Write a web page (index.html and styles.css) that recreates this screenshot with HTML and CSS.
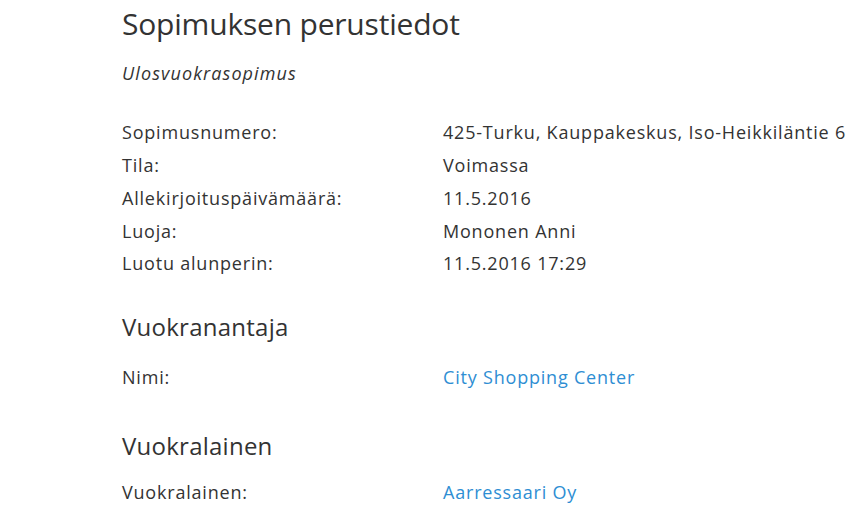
FILE: index.html
```html
<!DOCTYPE html>
<html lang="fi">
<head>
<meta charset="utf-8">
<link rel="stylesheet" href="styles.css">
</head>
<body>
<main class="page">
  <h1 class="title">Sopimuksen perustiedot</h1>
  <p class="subtitle">Ulosvuokrasopimus</p>
  <dl class="fields first">
    <dt>Sopimusnumero:</dt><dd>425-Turku, Kauppakeskus, Iso-Heikkiläntie 6</dd>
    <dt>Tila:</dt><dd>Voimassa</dd>
    <dt>Allekirjoituspäivämäärä:</dt><dd>11.5.2016</dd>
    <dt>Luoja:</dt><dd>Mononen Anni</dd>
    <dt>Luotu alunperin:</dt><dd>11.5.2016 17:29</dd>
  </dl>
  <h2 class="section">Vuokranantaja</h2>
  <dl class="fields">
    <dt>Nimi:</dt><dd><a href="#">City Shopping Center</a></dd>
  </dl>
  <h2 class="section">Vuokralainen</h2>
  <dl class="fields tight">
    <dt>Vuokralainen:</dt><dd><a href="#">Aarressaari Oy</a></dd>
  </dl>
</main>
</body>
</html>
```

FILE: styles.css
```css
* { box-sizing: border-box; }
html, body { margin: 0; padding: 0; background: #fff; }
body {
  font-family: "Open Sans", "Noto Sans", sans-serif;
  color: #333;
  overflow: hidden;
}
.page {
  padding: 0 0 0 122px;
  width: 861px;
}
.title {
  margin: 0;
  padding-top: 6px;
  font-size: 30px;
  line-height: 36px;
  font-weight: 400;
  letter-spacing: -0.2px;
}
.subtitle {
  margin: 20px 0 0;
  font-size: 18px;
  line-height: 22px;
  font-style: italic;
  letter-spacing: 1.1px;
}
.fields {
  display: grid;
  grid-template-columns: 321px 1fr;
  grid-auto-rows: 32.5px;
  align-items: center;
  margin: 0;
  font-size: 18px;
  letter-spacing: 0.8px;
  white-space: nowrap;
}
.fields.first { margin-top: 32px; grid-auto-rows: 32.75px; }
.fields dt, .fields dd { margin: 0; }
.fields a { color: #2e8ed3; text-decoration: none; }
.section {
  margin: 0;
  font-size: 24px;
  line-height: 30px;
  font-weight: 400;
  letter-spacing: 0.25px;
}
.fields.first + .section { margin-top: 32px; }
.section + .fields { margin-top: 19px; }
.section + .fields.tight { margin-top: 14px; }
.fields + .section { margin-top: 38px; }
```
